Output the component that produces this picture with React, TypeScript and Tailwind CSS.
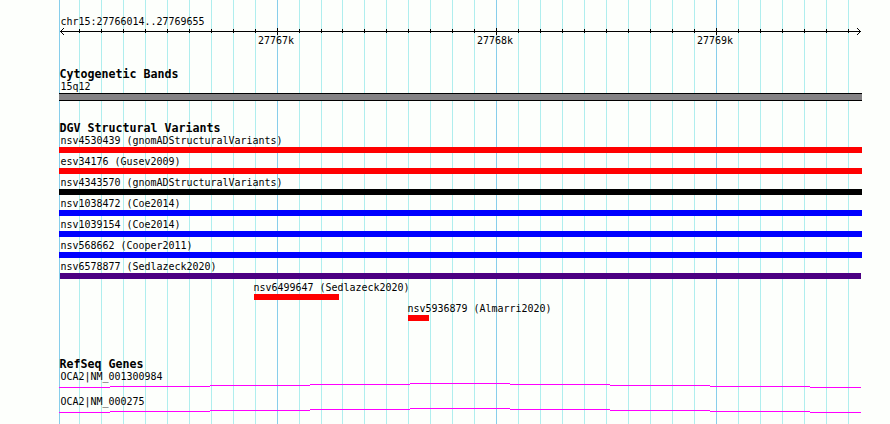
const ORIGIN = 59

const MAJOR_TICKS = [277, 496, 716]
const MINOR_TICKS = [
  79, 101, 123, 145, 167, 189, 211, 233, 255, 299, 321, 342, 364, 386, 408, 430, 452, 474,
  518, 540, 562, 584, 606, 628, 650, 672, 694, 738, 760, 782, 804, 826, 848,
]

const VARIANTS = [
  { label: 'nsv4530439 (gnomADStructuralVariants)', row: 'pl-[1.5px]', bar: 'w-[803px] bg-[#ff0000]' },
  { label: 'esv34176 (Gusev2009)', row: 'pl-[1.5px]', bar: 'w-[803px] bg-[#ff0000]' },
  { label: 'nsv4343570 (gnomADStructuralVariants)', row: 'pl-[1.5px]', bar: 'w-[803px] bg-black' },
  { label: 'nsv1038472 (Coe2014)', row: 'pl-[1.5px]', bar: 'w-[803px] bg-[#0000ff]' },
  { label: 'nsv1039154 (Coe2014)', row: 'pl-[1.5px]', bar: 'w-[803px] bg-[#0000ff]' },
  { label: 'nsv568662 (Cooper2011)', row: 'pl-[1.5px]', bar: 'w-[803px] bg-[#0000ff]' },
  { label: 'nsv6578877 (Sedlazeck2020)', row: 'pl-[1.5px]', bar: 'ml-px w-[801px] bg-[#4b0082]' },
  { label: 'nsv6499647 (Sedlazeck2020)', row: 'pl-[194.5px]', bar: 'ml-[195px] w-[85px] bg-[#ff0000]' },
  { label: 'nsv5936879 (Almarri2020)', row: 'pl-[348.5px]', bar: 'ml-[349px] w-[21px] bg-[#ff0000]' },
]

const GENES = ['OCA2|NM_001300984', 'OCA2|NM_000275']

function Grid() {
  return (
    <svg className="absolute inset-0" width="890" height="424" shapeRendering="crispEdges">
      {MINOR_TICKS.map((x) => (
        <rect key={x} x={x} y="0" width="1" height="424" fill="#afeeee" />
      ))}
      {[ORIGIN, ...MAJOR_TICKS].map((x) => (
        <rect key={x} x={x} y="0" width="1" height="424" fill="#87ceeb" />
      ))}
    </svg>
  )
}

function Ruler() {
  return (
    <div>
      <svg className="block" width="803" height="8" viewBox="59 27 803 8" shapeRendering="crispEdges">
        <rect x="60" y="31" width="801" height="1" />
        {MINOR_TICKS.map((x) => (
          <rect key={x} x={x} y="29" width="1" height="4" />
        ))}
        {MAJOR_TICKS.map((x) => (
          <rect key={x} x={x} y="28" width="1" height="7" />
        ))}
        <path d="M61 30h1v1h-1z M62 29h1v1h-1z M63 28h1v1h-1z M61 32h1v1h-1z M62 33h1v1h-1z M63 34h1v1h-1z" />
        <path d="M859 30h1v1h-1z M858 29h1v1h-1z M857 28h1v1h-1z M859 32h1v1h-1z M858 33h1v1h-1z M857 34h1v1h-1z" />
      </svg>
      <div className="flex h-3 pl-[199px] leading-3">
        <span className="w-[219px]">27767k</span>
        <span className="w-[220px]">27768k</span>
        <span>27769k</span>
      </div>
    </div>
  )
}

function TrackTitle({ children }: { children: string }) {
  return (
    <h2 className="h-3 pl-[0.5px] font-['DejaVu_Sans_Mono',monospace] text-[11.63px] leading-3 font-bold">
      {children}
    </h2>
  )
}

function Intron() {
  return (
    <svg className="block" width="803" height="5" viewBox="59 0 803 5" shapeRendering="crispEdges" fill="#ff00ff">
      <rect x="59" y="4" width="51" height="1" />
      <rect x="110" y="3" width="100" height="1" />
      <rect x="210" y="2" width="100" height="1" />
      <rect x="310" y="1" width="100" height="1" />
      <rect x="410" y="0" width="100" height="1" />
      <rect x="510" y="1" width="100" height="1" />
      <rect x="610" y="2" width="100" height="1" />
      <rect x="710" y="3" width="100" height="1" />
      <rect x="810" y="4" width="51" height="1" />
    </svg>
  )
}

export default function App() {
  return (
    <div className="relative h-[424px] w-[890px] overflow-hidden bg-[#fdfffc] font-['DejaVu_Sans_Mono',monospace] text-[9.97px] whitespace-pre text-black">
      <Grid />
      <main className="relative flex flex-col pt-[15px] pl-[59px]">
        <div className="h-3 pl-[1.5px] leading-[14px]">chr15:27766014..27769655</div>
        <Ruler />

        <section className="mt-[21px]">
          <TrackTitle>Cytogenetic Bands</TrackTitle>
          <div className="h-3 pl-[1.5px] leading-[14px]">15q12</div>
          <div className="mt-px h-2 w-[803px] border-y border-black bg-[#848284]" />
        </section>

        <section className="mt-[21px]">
          <TrackTitle>DGV Structural Variants</TrackTitle>
          {VARIANTS.map((v) => (
            <div key={v.label} className="h-[21px]">
              <div className={`h-[13px] leading-[14px] ${v.row}`}>{v.label}</div>
              <div className={`h-1.5 ${v.bar}`} />
            </div>
          ))}
        </section>

        <section className="mt-[35px]">
          <TrackTitle>RefSeq Genes</TrackTitle>
          {GENES.map((gene) => (
            <div key={gene} className="h-[25px]">
              <div className="h-[13px] pl-[1.5px] leading-[14px]">{gene}</div>
              <Intron />
            </div>
          ))}
        </section>
      </main>
    </div>
  )
}
